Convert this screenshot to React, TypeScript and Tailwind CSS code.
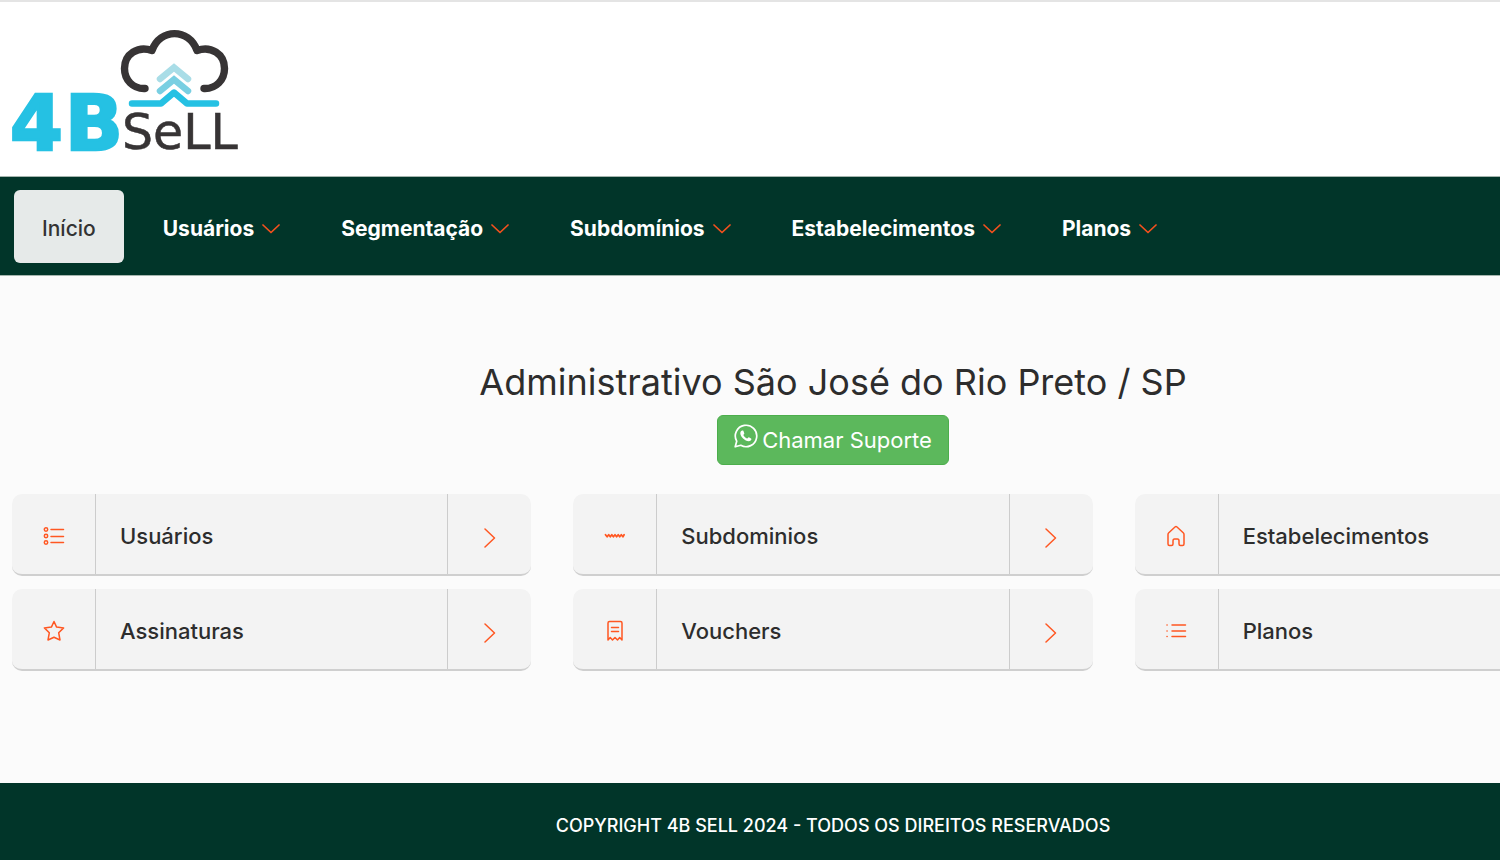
import type { ReactNode } from "react";

const navItems = ["Usuários", "Segmentação", "Subdomínios", "Estabelecimentos", "Planos"];

function Logo() {
  return (
    <svg width="236" height="146" viewBox="8 26 236 146" role="img" aria-label="4B Sell">
      <path
        d="M145 88.500C133 89 124.500 80 124.500 68.500C124.500 54 138 45.500 152 50.500C160 28 189 28 197 50.500C211 45.500 224.500 54 224.500 68.500C224.500 80 216 89 204 88.500"
        fill="none"
        stroke="#373435"
        strokeWidth="7.400"
        strokeLinecap="round"
        strokeLinejoin="round"
      />
      <path
        d="M160 79L174 67.500L188 79"
        fill="none"
        stroke="#a9dde7"
        strokeWidth="6.500"
        strokeLinecap="round"
      />
      <path
        d="M160 91L174 79.500L188 91"
        fill="none"
        stroke="#79cfe2"
        strokeWidth="6.500"
        strokeLinecap="round"
      />
      <path
        d="M132 103.500H161L174 92.500L187 103.500H216"
        fill="none"
        stroke="#25c1e3"
        strokeWidth="6.500"
        strokeLinecap="round"
        strokeLinejoin="round"
      />
      <text
        x="10"
        y="150"
        fontSize="76"
        fontWeight="700"
        fill="#25c1e3"
        stroke="#25c1e3"
        strokeWidth="2.600"
        fontFamily="DejaVu Sans, sans-serif"
      >
        4<tspan dx="2">B</tspan>
      </text>
      <text
        x="122"
        y="149"
        fontSize="49"
        fill="#373435"
        stroke="#373435"
        strokeWidth="0.500"
        fontFamily="DejaVu Sans, sans-serif"
      >
        SeLL
      </text>
    </svg>
  );
}

function LineIcon({ children }: { children: ReactNode }) {
  return (
    <svg
      width="22"
      height="22"
      viewBox="0 0 22 22"
      fill="none"
      stroke="#ff5722"
      strokeWidth="1.500"
      strokeLinecap="round"
      strokeLinejoin="round"
      aria-hidden="true"
    >
      {children}
    </svg>
  );
}

const icons = {
  users: (
    <LineIcon>
      <circle cx="3" cy="4.500" r="1.700" />
      <circle cx="3" cy="11" r="1.700" />
      <circle cx="3" cy="17.500" r="1.700" />
      <path d="M8 4.500h12.500M8 11.500h12.500M8 17.500h12.500" />
    </LineIcon>
  ),
  www: (
    <LineIcon>
      <path
        strokeWidth="1.800"
        d="M1.500 9.800l1.600 2 1.600-2 1.600 2 1.500-2 1.600 2 1.600-2 1.600 2 1.600-2 1.500 2 1.600-2 1.600 2 1.200-2"
      />
    </LineIcon>
  ),
  home: (
    <LineIcon>
      <path d="M3 9.500Q3 8.500 3.800 7.700L10 2q1-.8 2 0l6.200 5.700q.8.800.8 1.800v9.500q0 1.500-1.500 1.500h-2q-1.500 0-1.500-1.500v-3q0-2-1.500-2h-3q-1.500 0-1.500 2v3q0 1.500-1.500 1.500h-2Q3 20.500 3 19z" />
    </LineIcon>
  ),
  star: (
    <LineIcon>
      <path d="M11 1.500l2.600 5.600 7 .8-4.900 4.900 1.300 7.200-6-2.800-6 2.800 1.300-7.200L1.400 7.900l7-.8z" />
    </LineIcon>
  ),
  voucher: (
    <LineIcon>
      <path d="M4 20V3q0-1.500 1.500-1.500h11Q18 1.500 18 3v17l-2.300-2.500L13.500 20 11 17.500 8.500 20l-2.300-2.500zM7.500 7.500h7M7.500 11.500h7" />
    </LineIcon>
  ),
  list: (
    <LineIcon>
      <path d="M7 5h13.500M7 11h13.500M7 16.500h13.500M2 5h.1M2 11h.1M2 16.500h.1" />
    </LineIcon>
  ),
};

const cards = [
  { label: "Usuários", icon: icons.users },
  { label: "Subdominios", icon: icons.www },
  { label: "Estabelecimentos", icon: icons.home },
  { label: "Assinaturas", icon: icons.star },
  { label: "Vouchers", icon: icons.voucher },
  { label: "Planos", icon: icons.list },
];

function WhatsApp() {
  return (
    <svg width="24" height="24" viewBox="0 0 24 24" fill="none" stroke="#fff" strokeWidth="1.700" aria-hidden="true">
      <path d="M1.200 22.800l1.500-5.600a10.700 10.700 0 1 1 4.100 4.100z" strokeLinejoin="round" />
      <path
        d="M8.200 6.600c-.7 0-1.900 1-1.900 2.600 0 3.400 4.700 8 8.400 8 1.600 0 2.800-1.300 2.700-2.300 0-.4-2.200-1.600-2.700-1.600-.6 0-1 1.400-1.600 1.300-1.300-.3-3.500-2.500-3.700-3.500 0-.5 1-1 .9-1.600-.1-.7-.9-2.900-1.300-2.900z"
        fill="#fff"
        stroke="none"
      />
    </svg>
  );
}

export default function App() {
  return (
    <div className="min-h-screen overflow-x-clip bg-[#fbfbfb] font-['Inter','Noto_Sans',sans-serif] text-[#2d2d2d]">
      <div className="flex min-h-screen min-w-[1666px] flex-col">
        <header className="border-t-2 border-[#e4e4e4] bg-white px-2 pt-6 pb-1">
          <a href="#inicio" className="inline-block align-top">
            <Logo />
          </a>
        </header>

        <nav className="flex items-center gap-[5px] border-y border-[#a5b5ae] bg-[#013529] px-3.5 pt-[13px] pb-3 text-[21px] font-bold text-white">
          <a
            href="#inicio"
            className="mr-1.5 flex h-[73px] items-center rounded-md bg-[#e6eae9] px-7 pt-1 font-medium text-[#333]"
          >
            Início
          </a>
          {navItems.map((item) => (
            <button key={item} type="button" className="flex h-[73px] items-center gap-2 px-7 pt-1">
              {item}
              <svg width="18" height="10" viewBox="0 0 18 10" fill="none" stroke="#f4511e" strokeWidth="1.700" aria-hidden="true">
                <path d="M1 1l8 7.500L17 1" strokeLinecap="round" strokeLinejoin="round" />
              </svg>
            </button>
          ))}
        </nav>

        <main className="flex-1 px-3 pt-20 pb-24">
          <div className="flex flex-col items-center gap-[7px]">
            <h1 className="text-4xl leading-[52px]">Administrativo São José do Rio Preto / SP</h1>
            <button
              type="button"
              className="flex h-[50px] items-center gap-1 rounded-md border border-[#4cae4c] bg-[#5cb85c] px-4 text-[22px] text-white"
            >
              <span className="pb-2">
                <WhatsApp />
              </span>
              Chamar Suporte
            </button>
          </div>

          <div className="mt-[29px] grid grid-cols-3 gap-x-[42px] gap-y-[13px]">
            {cards.map((card) => (
              <a
                key={card.label}
                href={"#" + card.label.toLowerCase()}
                className="flex h-[82px] items-stretch rounded-[10px] border-b-2 border-[#cfcfcf] bg-[#f3f3f3]"
              >
                <span className="flex w-21 items-center justify-center border-r border-[#cccccc] pt-1">{card.icon}</span>
                <span className="flex flex-1 items-center px-6 pt-1 text-[22px] font-medium">{card.label}</span>
                <span className="flex w-21 items-center justify-center border-l border-[#cccccc] pt-2">
                  <svg width="12" height="20" viewBox="0 0 12 20" fill="none" stroke="#ff5722" strokeWidth="1.500" aria-hidden="true">
                    <path d="M1 1l9.500 9L1 19" strokeLinecap="round" strokeLinejoin="round" />
                  </svg>
                </span>
              </a>
            ))}
          </div>
        </main>

        <footer className="bg-[#013529] pt-7 pb-5 text-center text-lg leading-[29px] font-medium text-white">
          COPYRIGHT 4B SELL 2024 - TODOS OS DIREITOS RESERVADOS
        </footer>
      </div>
    </div>
  );
}
